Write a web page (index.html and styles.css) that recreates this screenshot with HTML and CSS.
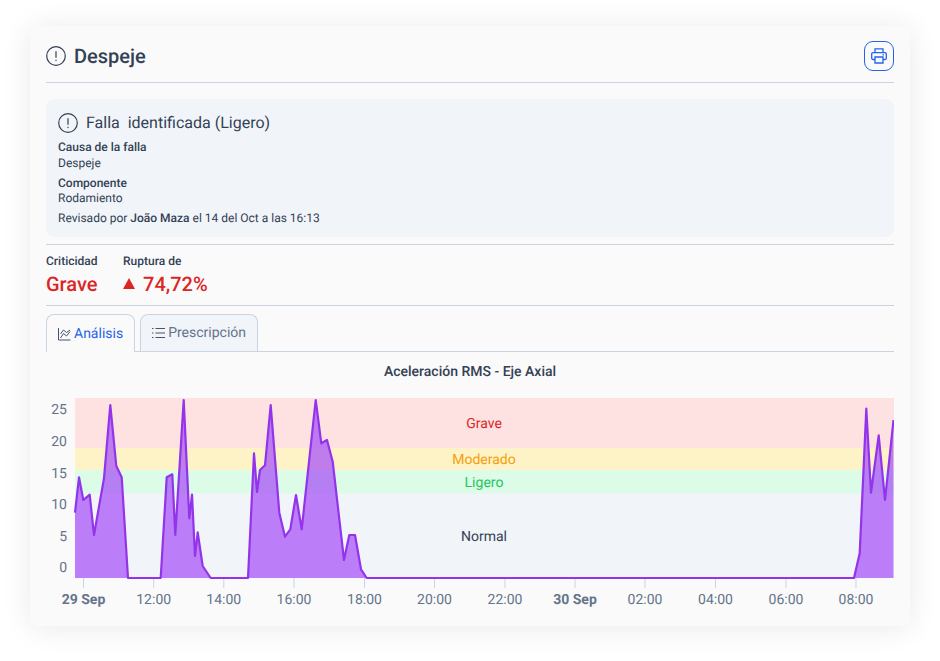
FILE: index.html
```html
<!DOCTYPE html>
<html>
<head>
	<meta charset="UTF-8" />
	<title>Despeje</title>
	<link rel="stylesheet" href="styles.css">
</head>
<body>
	<div class="card">
		<!--header-->
		<div class="head">
			<div class="head-title">
				<svg class="alert" width="20" height="20" viewBox="0 0 20 20"><circle cx="10" cy="10" r="9.3"/><path d="M10 5.5v5.8M10 14.2v.4"/></svg>
				<h1>Despeje</h1>
			</div>
			<button class="print">
				<svg width="16" height="16" viewBox="0 0 16 16"><path d="M4 4.7V.8h8v3.9"/><path d="M4 11.5H2A1.3 1.3 0 0 1 .7 10.2V6A1.3 1.3 0 0 1 2 4.7h12A1.3 1.3 0 0 1 15.3 6v4.2a1.3 1.3 0 0 1-1.3 1.3h-2"/><path d="M4 9h8v6H4z"/><path d="M11.5 6.8H13"/></svg>
			</button>
		</div>

		<!--failure info-->
		<div class="panel">
			<div class="panel-title">
				<svg class="alert" width="20" height="20" viewBox="0 0 20 20"><circle cx="10" cy="10" r="9.3"/><path d="M10 5.5v5.8M10 14.2v.4"/></svg>
				<span>Falla&nbsp; identificada (Ligero)</span>
			</div>
			<div class="field">
				<b>Causa de la falla</b>
				<span>Despeje</span>
			</div>
			<div class="field">
				<b>Componente</b>
				<span>Rodamiento</span>
			</div>
			<p class="review">Revisado por <b>João Maza</b> el 14 del Oct a las 16:13</p>
		</div>

		<!--stats-->
		<div class="stats">
			<div class="stat">
				<b>Criticidad</b>
				<span>Grave</span>
			</div>
			<div class="stat">
				<b>Ruptura de</b>
				<span><i class="tri"></i>74,72%</span>
			</div>
		</div>

		<!--tabs-->
		<div class="tabs">
			<div class="tab active">
				<svg width="13" height="14" viewBox="0 0 13 14"><path d="M.5 1v12h12"/><path d="M2.5 11l3-4.5 3 2.5L12 4.5M2.5 7l3-4 3 2.5L12 3"/></svg>
				Análisis
			</div>
			<div class="tab">
				<svg width="13" height="14" viewBox="0 0 13 14"><path d="M3.5 2.5H13M3.5 7H13M3.5 11.5H13"/><path d="M0 2.5h1.5M0 7h1.5M0 11.5h1.5"/></svg>
				Prescripción
			</div>
		</div>

		<!--chart-->
		<h2 class="chart-title">Aceleración RMS - Eje Axial</h2>
		<svg class="chart" width="848" height="232" viewBox="46 384 848 232">
			<rect class="b-normal" x="75" y="398" width="819" height="180"/>
			<rect class="b-grave" x="75" y="398" width="819" height="50"/>
			<rect class="b-mod" x="75" y="448" width="819" height="22"/>
			<rect class="b-lig" x="75" y="470" width="819" height="23.5"/>

			<text class="band t-grave" x="484" y="428">Grave</text>
			<text class="band t-mod" x="484" y="464">Moderado</text>
			<text class="band t-lig" x="484" y="487">Ligero</text>
			<text class="band t-norm" x="484" y="541">Normal</text>

			<path class="ticks" d="M83.5 578v10M153.7 578v10M223.8 578v10M294 578v10M364.5 578v10M434.5 578v10M505 578v10M575 578v10M645 578v10M715.5 578v10M786 578v10M856 578v10"/>

			<path class="area" d="M75 512.7L79 477.3L83.3 500L89.7 494.7L94 535L104 478.3L110.3 405L116.3 466L121.7 477.3L128 578L160.7 578L166.7 477.3L172.3 474.3L175.3 535L183.7 400L189.3 518.3L192 494.7L195 556L197.7 532.3L202.7 566L210.7 578L248 578L254 453.3L257 492L260 470L265 465.3L270.7 405L279.3 512.7L285 536.7L290.3 529.3L296 495L301.7 529.3L315.7 400L321.3 443.3L327 440L332.7 461.7L344 560L349.3 535L355 535L361 569.3L366.7 578L854 578L859.7 553.3L866.3 408.7L871 492.7L878.7 435.3L885 500L893.5 420L893.5 578L75 578Z"/>
			<path class="line" d="M75 512.7L79 477.3L83.3 500L89.7 494.7L94 535L104 478.3L110.3 405L116.3 466L121.7 477.3L128 578L160.7 578L166.7 477.3L172.3 474.3L175.3 535L183.7 400L189.3 518.3L192 494.7L195 556L197.7 532.3L202.7 566L210.7 578L248 578L254 453.3L257 492L260 470L265 465.3L270.7 405L279.3 512.7L285 536.7L290.3 529.3L296 495L301.7 529.3L315.7 400L321.3 443.3L327 440L332.7 461.7L344 560L349.3 535L355 535L361 569.3L366.7 578L854 578L859.7 553.3L866.3 408.7L871 492.7L878.7 435.3L885 500L893.5 420"/>

			<g class="y-axis">
				<text x="67" y="414">25</text>
				<text x="67" y="446">20</text>
				<text x="67" y="478">15</text>
				<text x="67" y="509">10</text>
				<text x="67" y="541">5</text>
				<text x="67" y="572">0</text>
			</g>
			<g class="x-axis">
				<text class="day" x="83.5" y="604">29 Sep</text>
				<text x="153.7" y="604">12:00</text>
				<text x="223.8" y="604">14:00</text>
				<text x="294" y="604">16:00</text>
				<text x="364.5" y="604">18:00</text>
				<text x="434.5" y="604">20:00</text>
				<text x="505" y="604">22:00</text>
				<text class="day" x="575" y="604">30 Sep</text>
				<text x="645" y="604">02:00</text>
				<text x="715.5" y="604">04:00</text>
				<text x="786" y="604">06:00</text>
				<text x="856" y="604">08:00</text>
			</g>
		</svg>
	</div>
</body>
</html>
```

FILE: styles.css
```css
body {
	margin: 0;
	padding: 26px 30px 35px;
	background: #fff;
	font-family: Roboto, sans-serif;
	color: #334155;
	text-rendering: geometricPrecision;
}
.card {
	box-sizing: border-box;
	width: 880px;
	height: 600px;
	padding: 15px 16px 0;
	background: #fafafa;
	border-radius: 8px;
	box-shadow: 0 2px 30px rgba(15, 23, 42, 0.09);
}
.head {
	display: flex;
	justify-content: space-between;
	align-items: flex-start;
	height: 41px;
	border-bottom: 1px solid #cbd5e1;
}
.head-title {
	display: flex;
	align-items: center;
	gap: 8px;
}
.alert {
	fill: none;
	stroke: #334155;
	stroke-width: 1.2;
	stroke-linecap: round;
}
h1 {
	margin: 0;
	font-size: 20px;
	font-weight: 500;
	line-height: 30px;
}
.print {
	display: flex;
	align-items: center;
	justify-content: center;
	width: 30px;
	height: 30px;
	padding: 0;
	background: transparent;
	border: 1px solid #2563eb;
	border-radius: 9px;
}
.print svg {
	fill: none;
	stroke: #2563eb;
	stroke-width: 1.3;
}
.panel {
	box-sizing: border-box;
	height: 138px;
	margin-top: 16px;
	padding: 13px 12px 0;
	background: #f1f5f9;
	border-radius: 8px;
}
.panel-title {
	display: flex;
	align-items: center;
	gap: 8px;
	font-size: 16px;
	line-height: 22px;
}
.field {
	display: flex;
	flex-direction: column;
	margin-top: 5px;
	font-size: 12px;
	line-height: 16px;
}
.field + .field {
	margin-top: 5px;
	line-height: 15px;
}
.field b, .review b, .stat b {
	font-weight: 500;
}
.review {
	margin: 5px 0 0;
	font-size: 12px;
	line-height: 15px;
}
.stats {
	display: flex;
	gap: 25.5px;
	height: 51px;
	margin-top: 7px;
	padding-top: 9px;
	border-top: 1px solid #cbd5e1;
	border-bottom: 1px solid #cbd5e1;
}
.stat {
	display: flex;
	flex-direction: column;
}
.stat b {
	font-size: 12px;
	line-height: 15px;
}
.stat span {
	display: flex;
	align-items: center;
	margin-top: 2px;
	font-size: 20px;
	font-weight: 500;
	line-height: 26px;
	color: #dc2626;
}
.tri {
	width: 0;
	height: 0;
	margin: 0 8px 2px 0;
	border-left: 6.5px solid transparent;
	border-right: 6.5px solid transparent;
	border-bottom: 11px solid #dc2626;
}
.tabs {
	display: flex;
	gap: 5px;
	height: 37px;
	margin-top: 8px;
	border-bottom: 1px solid #cbd5e1;
}
.tab {
	display: flex;
	align-items: center;
	gap: 3px;
	box-sizing: border-box;
	height: 37px;
	padding: 0 11px;
	font-size: 14px;
	color: #64748b;
	background: #f1f5f9;
	border: 1px solid #cbd5e1;
	border-bottom: 0;
	border-radius: 8px 8px 0 0;
}
.tab.active {
	height: 38px;
	color: #2563eb;
	background: #fafafa;
}
.tab svg {
	fill: none;
	stroke: #475569;
	stroke-width: 1;
}
.chart-title {
	margin: 12px 0 0;
	font-size: 14px;
	font-weight: 500;
	line-height: 16px;
	text-align: center;
}
.chart {
	display: block;
	margin-top: 4px;
}
.b-normal { fill: #f1f5f9; }
.b-grave { fill: #fee2e2; }
.b-mod { fill: #fef3c7; }
.b-lig { fill: #dcfce7; }
.band {
	font-size: 14px;
	text-anchor: middle;
}
.t-grave { fill: #dc2626; }
.t-mod { fill: #f59e0b; }
.t-lig { fill: #22c55e; }
.t-norm { fill: #334155; }
.ticks {
	stroke: #cbd5e1;
	stroke-width: 1;
}
.area {
	fill: #a855f7;
	fill-opacity: 0.75;
}
.line {
	fill: none;
	stroke: #9333ea;
	stroke-width: 2.2;
	stroke-linejoin: round;
}
.y-axis text {
	font-size: 14px;
	fill: #64748b;
	text-anchor: end;
}
.x-axis text {
	font-size: 14px;
	fill: #64748b;
	text-anchor: middle;
}
.x-axis .day {
	font-weight: 700;
}
```
